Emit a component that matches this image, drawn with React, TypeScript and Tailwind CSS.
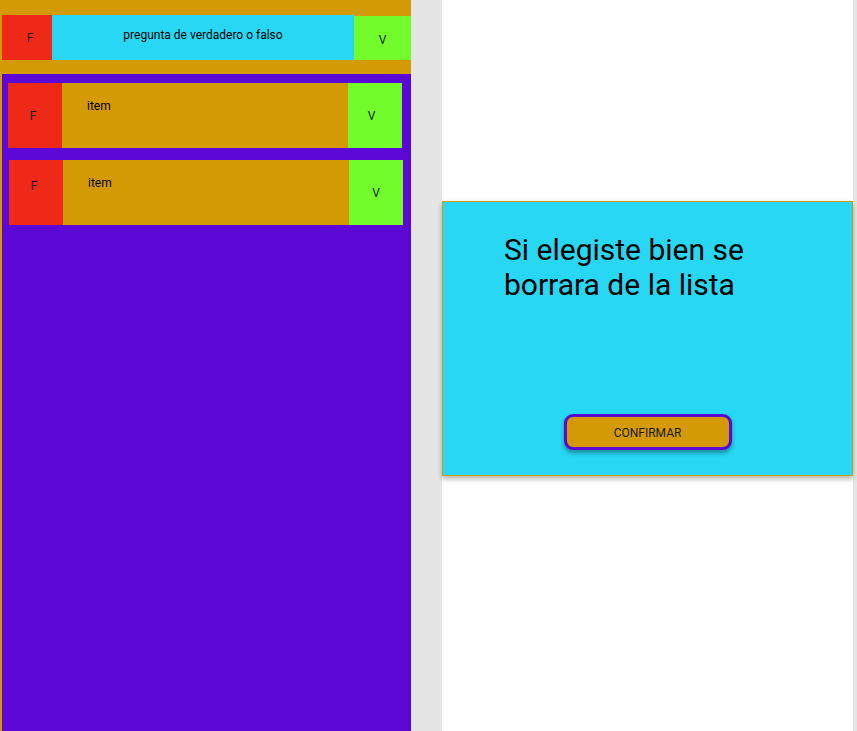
import React from "react";

const font = { fontFamily: "Roboto, 'Liberation Sans', sans-serif" };

function Item({ className, fTop, vTop, vShift }: { className: string; fTop: string; vTop: string; vShift: string }) {
  return (
    <div className={`flex h-[65px] ${className}`}>
      <div className={`w-[54px] bg-[#ee2918] flex justify-center pr-[4px] ${fTop}`}>
        <span className="text-[12px] leading-[14px] text-[#1a1a1a]">F</span>
      </div>
      <div className="flex-1 bg-[#d49a06] pl-[25px] pt-[10px]">
        <span className="text-[12px] leading-[14px] text-black">item</span>
      </div>
      <div className={`w-[54px] bg-[#72fc2c] flex justify-center ${vShift} ${vTop}`}>
        <span className="text-[12px] leading-[14px] text-[#1a1a1a]">V</span>
      </div>
    </div>
  );
}

export default function App() {
  return (
    <div className="flex h-[731px] w-[857px] bg-[#e5e5e5] overflow-hidden" style={font}>
      <div className="w-[411px] h-full bg-[#d49a06] pl-[2px] flex flex-col">
        <div className="h-[15px]" />
        <div className="flex h-[45px]">
          <div className="w-[50px] bg-[#ee2918] flex justify-center pl-[6px] pt-[16px]">
            <span className="text-[12px] leading-[14px] text-[#1a1a1a]">F</span>
          </div>
          <div className="flex-1 bg-[#27d7f4] flex justify-center pt-[13px]">
            <span className="text-[12px] leading-[14px] text-black">pregunta de verdadero o falso</span>
          </div>
          <div className="w-[57px] bg-[#72fc2c] flex justify-center pt-[17px] mt-[1px]">
            <span className="text-[12px] leading-[14px] text-[#1a1a1a]">V</span>
          </div>
        </div>
        <div className="h-[14px]" />
        <div className="flex-1 bg-[#5b08d6] flex flex-col">
          <Item className="mt-[9px] ml-[6px] mr-[9px]" fTop="pt-[26px]" vTop="pt-[26px]" vShift="pr-[7px]" />
          <Item className="mt-[12px] ml-[7px] mr-[8px]" fTop="pt-[19px]" vTop="pt-[26px]" vShift="" />
        </div>
      </div>
      <div className="w-[31px]" />
      <div className="w-[411px] h-full bg-white pt-[201px]">
        <div className="h-[275px] bg-[#27d7f4] border border-[#d49a06] shadow-[0_3px_5px_rgba(0,0,0,0.3)] flex flex-col">
          <div className="pl-[61px] pt-[30px] text-[30px] leading-[35px] text-black">
            Si elegiste bien se
            <br />
            borrara de la lista
          </div>
          <div className="flex justify-center mt-auto mb-[25px]">
            <button className="w-[168px] h-[36px] rounded-[9px] border-[3px] border-[#5b08d6] bg-[#d49a06] text-[12px] text-[#1a1a1a] shadow-[0_3px_4px_rgba(0,0,0,0.35)] flex items-center justify-center pt-[2px]">
              CONFIRMAR
            </button>
          </div>
        </div>
      </div>
    </div>
  );
}
